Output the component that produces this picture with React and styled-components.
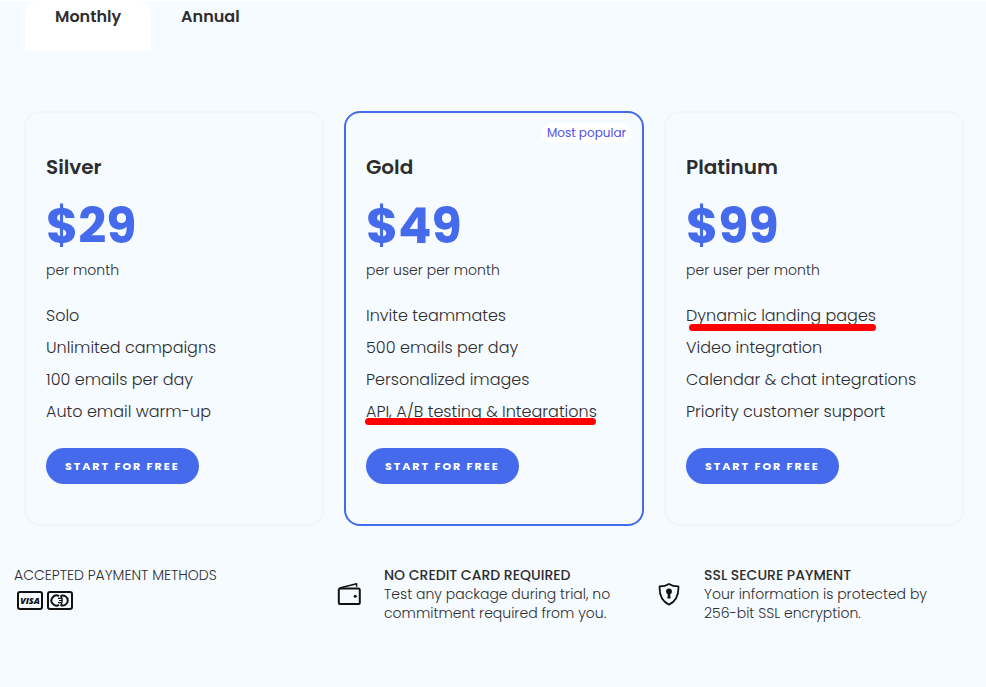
import React, { useState } from "react";
import styled, { createGlobalStyle } from "styled-components";

const plans = [
  {
    name: "Silver",
    price: "$29",
    period: "per month",
    features: [
      { text: "Solo" },
      { text: "Unlimited campaigns" },
      { text: "100 emails per day" },
      { text: "Auto email warm-up" },
    ],
  },
  {
    name: "Gold",
    price: "$49",
    period: "per user per month",
    popular: true,
    features: [
      { text: "Invite teammates" },
      { text: "500 emails per day" },
      { text: "Personalized images" },
      { text: "API, A/B testing & Integrations", marker: { left: -1, bottom: 3, width: 231 } },
    ],
  },
  {
    name: "Platinum",
    price: "$99",
    period: "per user per month",
    features: [
      { text: "Dynamic landing pages", marker: { left: 3, bottom: 1, width: 187 } },
      { text: "Video integration" },
      { text: "Calendar & chat integrations" },
      { text: "Priority customer support" },
    ],
  },
];

function VisaIcon() {
  return (
    <svg width="28" height="20" viewBox="0 0 28 20" role="img" aria-label="Visa">
      <rect x="2" y="1" width="24" height="17" rx="2" fill="none" stroke="#111" strokeWidth="2" />
      <text x="14" y="13" textAnchor="middle" fontFamily="Open Sans, sans-serif" fontSize="9" fontWeight="800" fontStyle="italic" fill="#111">
        VISA
      </text>
    </svg>
  );
}

function MastercardIcon() {
  return (
    <svg width="28" height="20" viewBox="0 0 28 20" role="img" aria-label="Mastercard">
      <g fill="none" stroke="#111" strokeWidth="2">
        <rect x="2" y="1" width="24" height="17" rx="2" />
        <path d="M13 5.2A5 5 0 1 0 13 13.8" />
        <path d="M14.6 5A5 5 0 1 1 14.6 14" />
        <path d="M12 7.4H15.5M12 11.6H15.5" strokeWidth="1.3" />
        <path d="M13 9.5H16" strokeWidth="1" />
        <path d="M14.8 5Q17.6 9.5 14.8 14" strokeWidth="1.5" />
      </g>
    </svg>
  );
}

function WalletIcon() {
  return (
    <svg width="24" height="24" viewBox="0 1 24 24" fill="none" stroke="#111" strokeWidth="2" strokeLinejoin="round" aria-hidden="true">
      <rect x="1.8" y="6.6" width="21" height="15.4" rx="1.6" />
      <path d="M2.6 6L19.6 1.8V4.8" strokeWidth="1.5" />
      <circle cx="18.2" cy="14.2" r="1.5" fill="#111" stroke="none" />
    </svg>
  );
}

function ShieldIcon() {
  return (
    <svg width="24" height="24" viewBox="0 1 24 24" fill="none" stroke="#111" strokeWidth="1.8" strokeLinejoin="round" aria-hidden="true">
      <path d="M12 2C9.4 3.7 6 4.4 2.6 4.4C2.2 12.6 4.6 19.2 12 22.6C19.4 19.2 21.8 12.6 21.4 4.4C18 4.4 14.6 3.7 12 2Z" />
      <circle cx="12" cy="9.4" r="2.9" fill="#111" stroke="none" />
      <path d="M11 10L10.4 16.6H13.6L13 10Z" fill="#111" stroke="none" />
    </svg>
  );
}

function App() {
  const [billing, setBilling] = useState("Monthly");

  return (
    <Page>
      <GlobalStyle />
      <Tabs role="tablist">
        {["Monthly", "Annual"].map((label) => (
          <Tab
            key={label}
            role="tab"
            aria-selected={billing === label}
            $active={billing === label}
            onClick={() => setBilling(label)}
          >
            {label}
          </Tab>
        ))}
      </Tabs>

      <Plans>
        {plans.map((plan) => (
          <Card key={plan.name} $popular={plan.popular}>
            {plan.popular && <Badge>Most popular</Badge>}
            <PlanName>{plan.name}</PlanName>
            <Price>{plan.price}</Price>
            <Period>{plan.period}</Period>
            <Features>
              {plan.features.map((feature) => (
                <Feature key={feature.text}>
                  {feature.text}
                  {feature.marker && (
                    <Marker
                      $left={feature.marker.left}
                      $bottom={feature.marker.bottom}
                      $width={feature.marker.width}
                    />
                  )}
                </Feature>
              ))}
            </Features>
            <StartButton>START FOR FREE</StartButton>
          </Card>
        ))}
      </Plans>

      <Footer>
        <div>
          <Note>ACCEPTED PAYMENT METHODS</Note>
          <Methods>
            <VisaIcon />
            <MastercardIcon />
          </Methods>
        </div>
        <Perk>
          <WalletIcon />
          <Note>
            <strong>NO CREDIT CARD REQUIRED</strong>
            <br />
            Test any package during trial, no
            <br />
            commitment required from you.
          </Note>
        </Perk>
        <Perk>
          <ShieldIcon />
          <Note>
            <strong>SSL SECURE PAYMENT</strong>
            <br />
            Your information is protected by
            <br />
            256-bit SSL encryption.
          </Note>
        </Perk>
      </Footer>
    </Page>
  );
}

export default App;

const GlobalStyle = createGlobalStyle`
  * {
    box-sizing: border-box;
  }
  body {
    margin: 0;
    background: #f6fbff;
    color: #2d2d2f;
    font-family: Poppins, Inter, sans-serif;
  }
  button {
    font-family: inherit;
    border: none;
    cursor: pointer;
  }
`;

const Page = styled.div`
  border-top: 1px solid #fff;
`;

const Tabs = styled.div`
  display: flex;
  padding: 0 25px;
`;

const Tab = styled.button`
  height: 50px;
  padding: 0 30px 20px;
  border-radius: 12px 12px 0 0;
  background: ${(props) => (props.$active ? "#fff" : "transparent")};
  color: #2d2d2f;
  font-size: 16px;
  font-weight: 600;
`;

const Plans = styled.div`
  display: grid;
  grid-template-columns: repeat(3, 1fr);
  gap: 20px;
  margin-top: 60px;
  padding: 0 22px 0 24px;
`;

const Card = styled.section`
  position: relative;
  padding: 40px 20px;
  border: 2px solid ${(props) => (props.$popular ? "#456aeb" : "#f3f5f9")};
  border-radius: 16px;
`;

const Badge = styled.span`
  position: absolute;
  top: 10px;
  right: 10px;
  padding: 0 6px;
  border-radius: 10px;
  background: #fff;
  color: #4f4fe6;
  font-size: 12px;
  line-height: 20px;
`;

const PlanName = styled.h2`
  margin: 0;
  font-size: 20px;
  font-weight: 600;
  line-height: 28px;
`;

const Price = styled.div`
  margin-top: 13px;
  color: #456aeb;
  font-size: 49px;
  font-weight: 700;
  line-height: 64px;
`;

const Period = styled.div`
  font-size: 14px;
  font-weight: 300;
  line-height: 24px;
`;

const Features = styled.ul`
  margin: 18px 0 20px;
  padding: 0;
  list-style: none;
`;

const Feature = styled.li`
  position: relative;
  font-size: 16px;
  font-weight: 300;
  line-height: 32px;
  white-space: nowrap;
`;

const Marker = styled.span`
  position: absolute;
  left: ${(props) => props.$left}px;
  bottom: ${(props) => props.$bottom}px;
  width: ${(props) => props.$width}px;
  height: 7px;
  border-radius: 4px;
  background: #ff0000;
`;

const StartButton = styled.button`
  height: 36px;
  padding: 0 19px;
  border-radius: 18px;
  background: #456aeb;
  color: #fff;
  font-size: 11px;
  font-weight: 700;
  letter-spacing: 2px;
`;

const Footer = styled.footer`
  display: grid;
  grid-template-columns: repeat(3, 1fr);
  margin-top: 40px;
  padding: 0 12px 60px 14px;
`;

const Note = styled.p`
  margin: 0;
  font-size: 14px;
  font-weight: 300;
  line-height: 19px;
  white-space: nowrap;

  strong {
    font-weight: 500;
  }
`;

const Methods = styled.div`
  display: flex;
  gap: 2px;
  margin-top: 6px;
  padding-left: 2px;
`;

const Perk = styled.div`
  display: flex;
  align-items: center;
  gap: 23px;
  padding-left: 3px;
`;
